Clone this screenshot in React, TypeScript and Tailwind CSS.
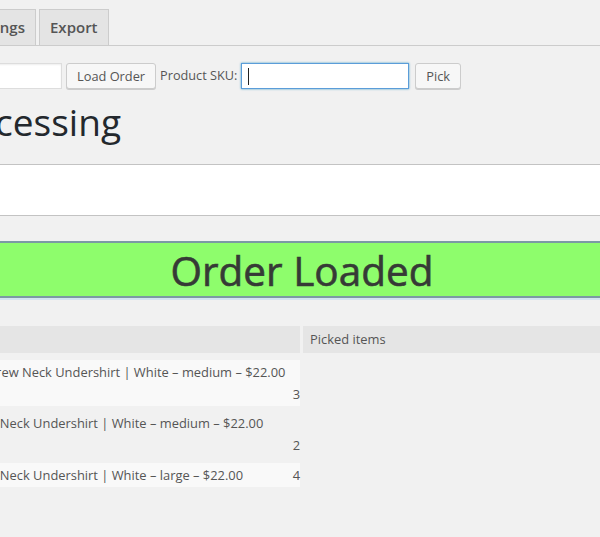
import React from "react";

function Tab({ children }: { children: React.ReactNode }) {
  return (
    <span className="shrink-0 h-[36px] px-[10px] flex items-center border border-b-0 border-[#ccc] bg-[#e4e4e4] text-[15px] font-semibold text-[#555] whitespace-nowrap">
      {children}
    </span>
  );
}

function Button({ children }: { children: React.ReactNode }) {
  return (
    <button className="shrink-0 h-[26px] px-[10px] border border-[#ccc] bg-[#f7f7f7] rounded-[3px] shadow-[0_1px_0_#ccc] text-[12.8px] leading-[24px] text-[#555] whitespace-nowrap">
      {children}
    </button>
  );
}

type Item = { name: string; qty: number; striped: boolean; mt: string };

const items: Item[] = [
  { name: "Crew Neck Undershirt | White – medium – $22.00", qty: 3, striped: true, mt: "mt-[7px]" },
  { name: "V-Neck Undershirt | White – medium – $22.00", qty: 2, striped: false, mt: "mt-[5px]" },
  { name: "V-Neck Undershirt | White – large – $22.00", qty: 4, striped: true, mt: "mt-[6px]" },
];

export default function App() {
  return (
    <div className="w-[600px] h-[537px] overflow-hidden bg-[#f1f1f1] font-['Open_Sans',sans-serif] text-[#555]">
      {/* Tabs */}
      <div className="flex items-end pt-[9px] border-b border-[#ccc]">
        <div className="w-[36px] shrink-0 flex justify-end gap-[4px]">
          <Tab>General</Tab>
          <Tab>Settings</Tab>
        </div>
        <div className="ml-[3px] flex">
          <Tab>Export</Tab>
        </div>
      </div>

      {/* Controls */}
      <div className="mt-[17px] flex items-center h-[26px]">
        <div className="w-[62px] shrink-0 flex justify-end">
          <div className="shrink-0 w-[160px] h-[26px] border border-[#ddd] bg-white shadow-[inset_0_1px_2px_rgba(0,0,0,0.07)]" />
        </div>
        <div className="ml-[4px] flex">
          <Button>Load Order</Button>
        </div>
        <span className="ml-[4px] text-[12.7px] text-[#555] whitespace-nowrap">Product SKU:</span>
        <div className="ml-[4px] shrink-0 w-[168px] h-[26px] border border-[#5b9dd9] bg-white shadow-[0_0_2px_rgba(30,140,190,0.8)] flex items-center pl-[6px]">
          <span className="w-px h-[17px] bg-[#222]" />
        </div>
        <div className="ml-[6px] flex">
          <Button>Pick</Button>
        </div>
      </div>

      {/* Heading */}
      <div className="mt-[11px] h-[44px] flex">
        <div className="w-[121px] shrink-0 flex justify-end">
          <span className="shrink-0 whitespace-nowrap text-[37px] leading-[44px] text-[#23282d]">Order Processing</span>
        </div>
      </div>

      {/* White box */}
      <div className="mt-[20px] h-[52px] bg-white border-t border-b border-[#c3c3c3]" />

      {/* Green status */}
      <div className="mt-[25px] h-[57px] bg-[#8efd6c] border-y-2 border-[#7b9aa4] shadow-[0_2px_0_#d3e5f0] flex justify-center items-center pl-[4px] pt-[2px]">
        <span className="text-[40.5px] leading-[53px] text-[#363a36] [-webkit-text-stroke:0.6px_#363a36] whitespace-nowrap">Order Loaded</span>
      </div>

      {/* Table */}
      <div className="mt-[28px] flex items-start">
        <div className="w-[320px] -ml-[20px] shrink-0 flex flex-col">
          <div className="h-[27px] bg-[#e5e5e5]" />
          {items.map((it) => (
            <div
              key={it.name}
              className={`${it.mt} ${it.striped ? "bg-[#f9f9f9]" : ""} flex flex-wrap pl-[8px] py-[1px] text-[12.9px] leading-[22px] text-[#555]`}
            >
              <span className="whitespace-nowrap">{it.name}</span>
              <span className="ml-auto w-[48px] text-right">{it.qty}</span>
            </div>
          ))}
        </div>
        <div className="ml-[3px] flex-1">
          <div className="h-[27px] bg-[#e5e5e5] pl-[7px] text-[12.9px] leading-[27px] text-[#555]">Picked items</div>
        </div>
      </div>
    </div>
  );
}
